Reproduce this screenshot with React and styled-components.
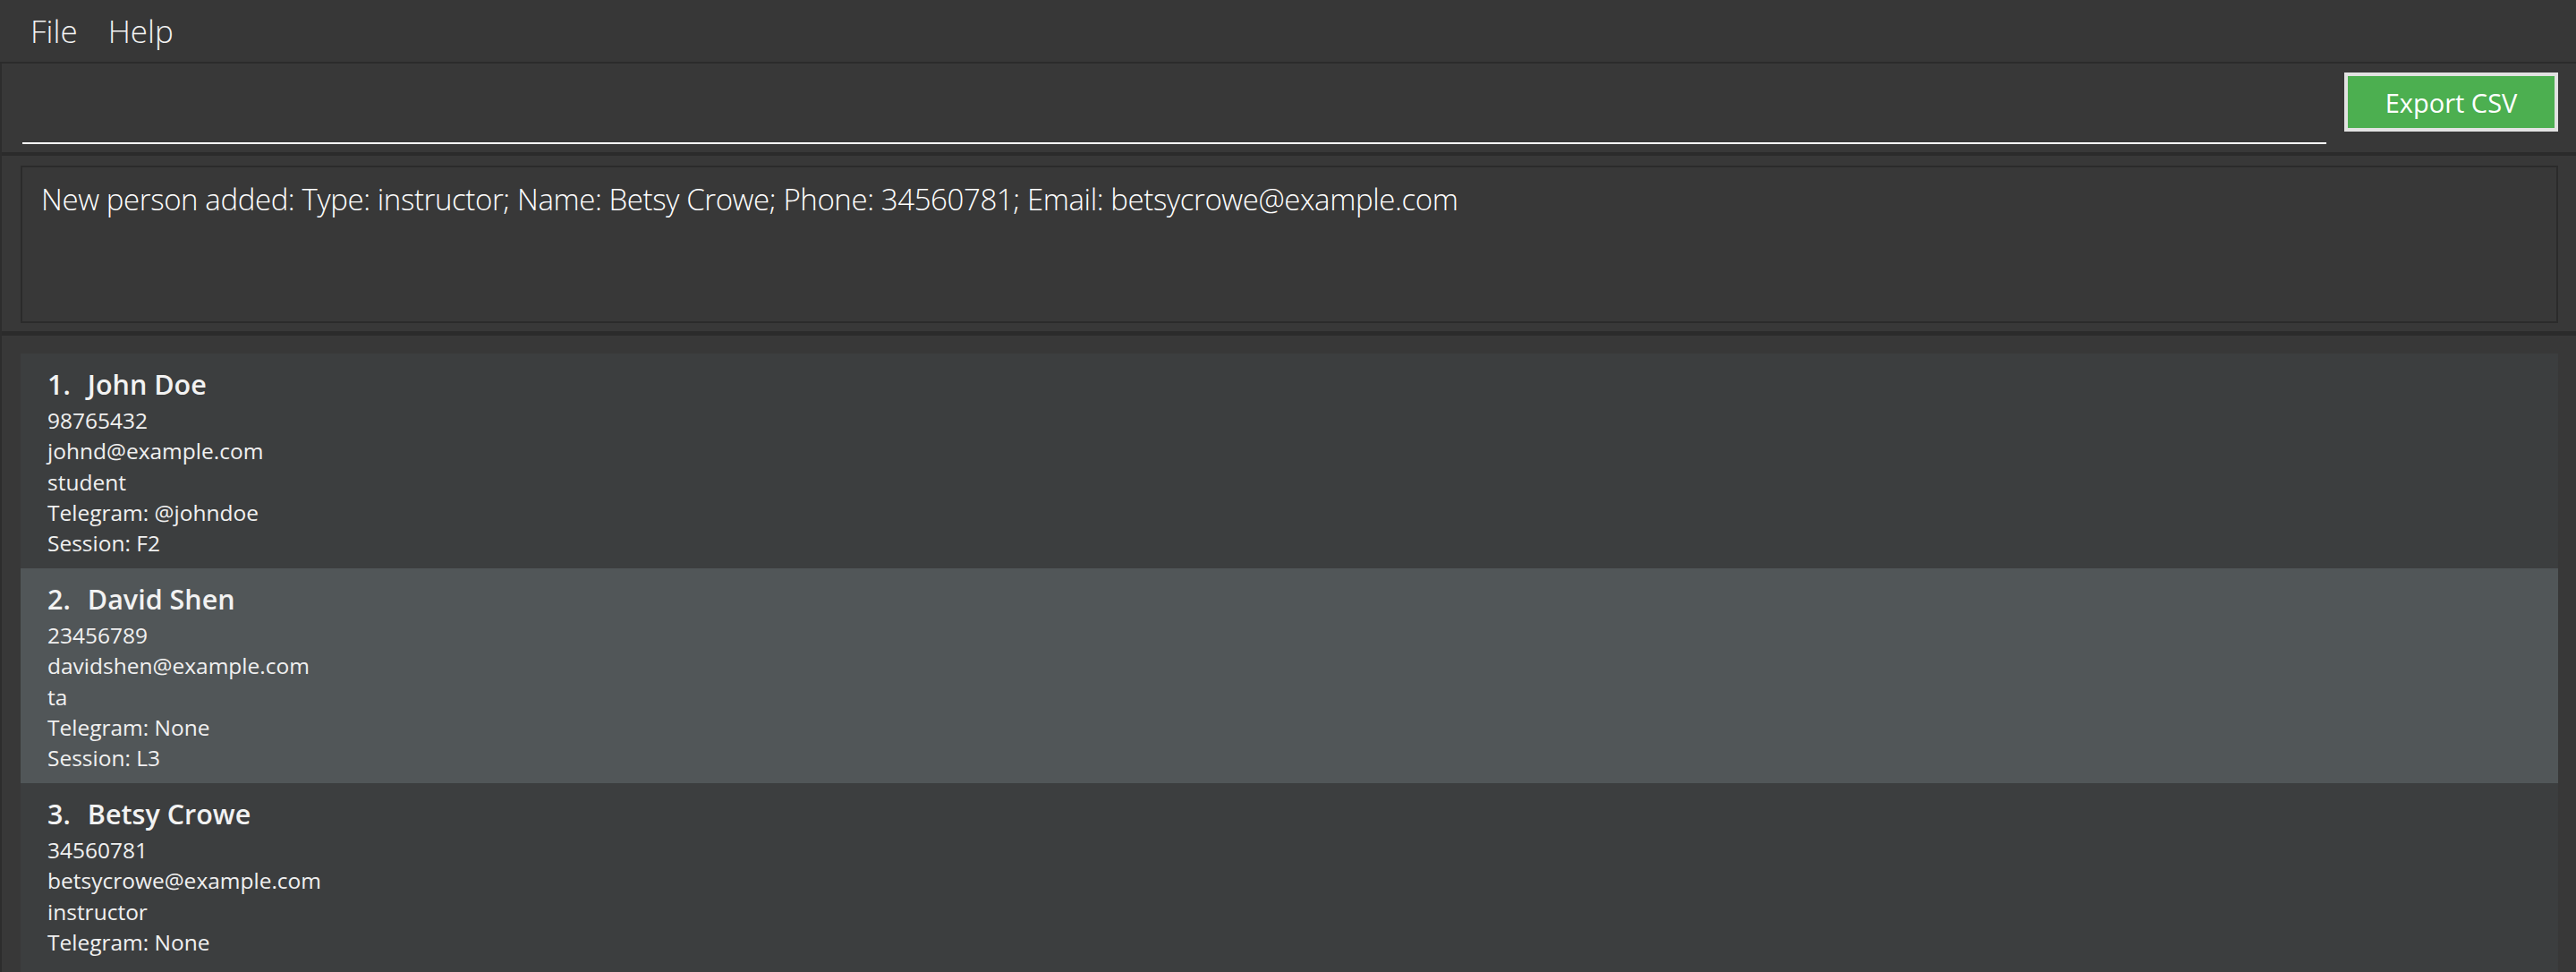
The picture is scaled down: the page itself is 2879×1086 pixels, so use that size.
import React from 'react';
import styled, { createGlobalStyle } from 'styled-components';

const GlobalStyle = createGlobalStyle`
    html, body {
        margin: 0;
        padding: 0;
        background: #383838;
        overflow: hidden;
    }
    * {
        box-sizing: border-box;
    }
`

const persons = [
    { name: 'John Doe', phone: '98765432', email: 'johnd@example.com', type: 'student', telegram: '@johndoe', session: 'F2' },
    { name: 'David Shen', phone: '23456789', email: 'davidshen@example.com', type: 'ta', telegram: 'None', session: 'L3' },
    { name: 'Betsy Crowe', phone: '34560781', email: 'betsycrowe@example.com', type: 'instructor', telegram: 'None' },
]

function App() {
    return (
        <Window>
            <GlobalStyle />
            <MenuBar>
                <MenuItem>File</MenuItem>
                <MenuItem>Help</MenuItem>
            </MenuBar>
            <Body>
                <CommandPane>
                    <CommandField />
                    <ExportButton>Export CSV</ExportButton>
                </CommandPane>
                <ResultPane>
                    <ResultBox>
                        New person added: Type: instructor; Name: Betsy Crowe; Phone: 34560781; Email: betsycrowe@example.com
                    </ResultBox>
                </ResultPane>
                <ListPane>
                    {persons.map((p, i) => (
                        <Card key={p.name} odd={i % 2 === 1}>
                            <CardTitle>
                                <span>{i + 1}.</span>
                                <span>{p.name}</span>
                            </CardTitle>
                            <CardLine>{p.phone}</CardLine>
                            <CardLine>{p.email}</CardLine>
                            <CardLine>{p.type}</CardLine>
                            <CardLine>Telegram: {p.telegram}</CardLine>
                            {p.session && <CardLine>Session: {p.session}</CardLine>}
                        </Card>
                    ))}
                </ListPane>
            </Body>
        </Window>
    )
}

export default App

const Window = styled.div`
    width: 2879px;
    height: 1086px;
    display: flex;
    flex-direction: column;
    background: #383838;
    font-family: "Open Sans", "Noto Sans", sans-serif;
    color: #ffffff;
    overflow: hidden;
`

const MenuBar = styled.div`
    height: 71px;
    flex-shrink: 0;
    display: flex;
    align-items: center;
    padding-left: 21px;
    gap: 8px;
    background: #373737;
    border-bottom: 2px solid #2b2b2b;
`

const MenuItem = styled.div`
    font-size: 35px;
    font-weight: 300;
    line-height: 69px;
    padding: 0 13px;
    color: #f2f2f2;
`

const Body = styled.div`
    flex: 1;
    display: flex;
    flex-direction: column;
    border-left: 2px solid #2d2d2d;
`

const CommandPane = styled.div`
    height: 103px;
    flex-shrink: 0;
    display: flex;
    align-items: flex-start;
    gap: 20px;
    padding: 10px 20px 0 23px;
    border-bottom: 4px solid #2b2b2b;
`

const CommandField = styled.div`
    flex: 1;
    height: 80px;
    border-bottom: 2px solid #ffffff;
`

const ExportButton = styled.button`
    width: 239px;
    height: 66px;
    background: #4caf50;
    border: 4px solid #e2e2e2;
    color: #ffffff;
    font-family: "Open Sans", "Noto Sans", sans-serif;
    font-size: 29px;
    padding: 0;
    cursor: pointer;
`

const ResultPane = styled.div`
    height: 201px;
    flex-shrink: 0;
    padding: 11px 20px 9px 21px;
    border-bottom: 5px solid #2b2b2b;
`

const ResultBox = styled.div`
    height: 176px;
    border: 2px solid #2b2b2b;
    padding: 12px 21px;
    font-size: 33px;
    font-weight: 300;
    letter-spacing: -0.4px;
    line-height: 48px;
    white-space: nowrap;
`

const ListPane = styled.div`
    flex: 1;
    display: flex;
    flex-direction: column;
    padding: 20px 20px 0 21px;
`

const Card = styled.div`
    height: 240px;
    flex-shrink: 0;
    padding: 12px 30px 0;
    background: ${props => (props.odd ? '#515658' : '#3c3e3f')};
`

const CardTitle = styled.div`
    display: flex;
    gap: 19px;
    font-size: 30.5px;
    font-weight: 600;
    line-height: 44px;
    margin-bottom: 2px;
    color: #f2f2f2;
`

const CardLine = styled.div`
    font-size: 24.5px;
    line-height: 34.3px;
    color: #f0f0f0;
`
